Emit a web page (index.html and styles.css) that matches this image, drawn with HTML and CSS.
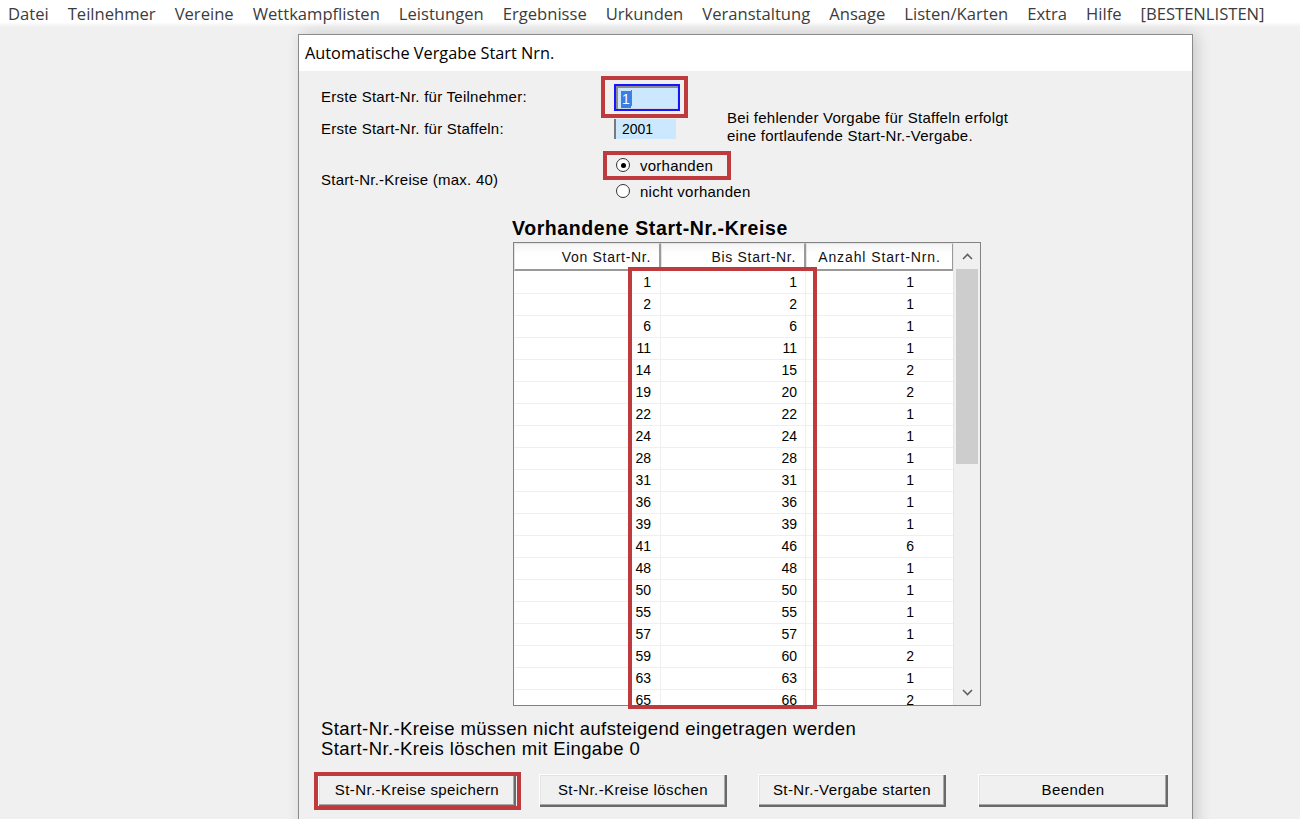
FILE: index.html
```html
<!DOCTYPE html>
<html lang="de">
<head>
    <meta charset="UTF-8">
    <title>Automatische Vergabe Start Nrn.</title>
    <link rel="stylesheet" href="styles.css">
</head>
<body>
    <nav class="menubar">
        <span>Datei</span>
        <span>Teilnehmer</span>
        <span>Vereine</span>
        <span>Wettkampflisten</span>
        <span>Leistungen</span>
        <span>Ergebnisse</span>
        <span>Urkunden</span>
        <span>Veranstaltung</span>
        <span>Ansage</span>
        <span>Listen/Karten</span>
        <span>Extra</span>
        <span>Hilfe</span>
        <span>[BESTENLISTEN]</span>
    </nav>

    <div class="desk">
        <div class="dialog">
            <div class="titlebar">Automatische Vergabe Start Nrn.</div>
            <div class="dialog-body">
                <div class="settings">
                    <label class="lbl row1">Erste Start-Nr. für Teilnehmer:</label>
                    <div class="row1 ctl">
                        <div class="field focused marked-input">
                            <span class="sel">1</span><span class="caret"></span>
                        </div>
                    </div>

                    <label class="lbl row2">Erste Start-Nr. für Staffeln:</label>
                    <div class="row2 ctl">
                        <div class="field small">2001</div>
                    </div>
                    <p class="info row2">Bei fehlender Vorgabe für Staffeln erfolgt<br>eine fortlaufende Start-Nr.-Vergabe.</p>

                    <label class="lbl row3">Start-Nr.-Kreise (max. 40)</label>
                    <div class="row3 radios">
                        <div class="radio marked-radio"><span class="dot checked"></span>vorhanden</div>
                        <div class="radio"><span class="dot"></span>nicht vorhanden</div>
                    </div>
                </div>

                <h3 class="list-title">Vorhandene Start-Nr.-Kreise</h3>

                <div class="listview">
                    <div class="cols">
                        <div class="lv-head">
                            <div>Von Start-Nr.</div>
                            <div>Bis Start-Nr.</div>
                            <div class="center">Anzahl Start-Nrn.</div>
                        </div>
                        <div class="lv-body">
                            <div class="lv-row"><div>1</div><div>1</div><div>1</div></div>
                            <div class="lv-row"><div>2</div><div>2</div><div>1</div></div>
                            <div class="lv-row"><div>6</div><div>6</div><div>1</div></div>
                            <div class="lv-row"><div>11</div><div>11</div><div>1</div></div>
                            <div class="lv-row"><div>14</div><div>15</div><div>2</div></div>
                            <div class="lv-row"><div>19</div><div>20</div><div>2</div></div>
                            <div class="lv-row"><div>22</div><div>22</div><div>1</div></div>
                            <div class="lv-row"><div>24</div><div>24</div><div>1</div></div>
                            <div class="lv-row"><div>28</div><div>28</div><div>1</div></div>
                            <div class="lv-row"><div>31</div><div>31</div><div>1</div></div>
                            <div class="lv-row"><div>36</div><div>36</div><div>1</div></div>
                            <div class="lv-row"><div>39</div><div>39</div><div>1</div></div>
                            <div class="lv-row"><div>41</div><div>46</div><div>6</div></div>
                            <div class="lv-row"><div>48</div><div>48</div><div>1</div></div>
                            <div class="lv-row"><div>50</div><div>50</div><div>1</div></div>
                            <div class="lv-row"><div>55</div><div>55</div><div>1</div></div>
                            <div class="lv-row"><div>57</div><div>57</div><div>1</div></div>
                            <div class="lv-row"><div>59</div><div>60</div><div>2</div></div>
                            <div class="lv-row"><div>63</div><div>63</div><div>1</div></div>
                            <div class="lv-row"><div>65</div><div>66</div><div>2</div></div>
                        </div>
                    </div>
                    <div class="scrollbar">
                        <div class="arrow">
                            <svg width="11" height="7" viewBox="0 0 11 7"><path d="M1 6 L5.5 1.5 L10 6" fill="none" stroke="#606060" stroke-width="1.6"/></svg>
                        </div>
                        <div class="track"><div class="thumb"></div></div>
                        <div class="arrow">
                            <svg width="11" height="7" viewBox="0 0 11 7"><path d="M1 1 L5.5 5.5 L10 1" fill="none" stroke="#606060" stroke-width="1.6"/></svg>
                        </div>
                    </div>
                    <!-- highlight over the first two columns -->
                    <div class="mark mark-cols"></div>
                </div>

                <p class="notes">Start-Nr.-Kreise müssen nicht aufsteigend eingetragen werden<br>Start-Nr.-Kreis löschen mit Eingabe 0</p>

                <div class="buttons">
                    <button class="btn btn-save marked-btn">St-Nr.-Kreise speichern</button>
                    <button class="btn btn-del">St-Nr.-Kreise löschen</button>
                    <button class="btn btn-run">St-Nr.-Vergabe starten</button>
                    <button class="btn btn-end">Beenden</button>
                </div>
            </div>
        </div>
    </div>
</body>
</html>
```
FILE: styles.css
```css
html, body {
    height: 100%;
    overflow: hidden;
}
body {
    margin: 0;
    background-color: #f0f0f0;
    font-family: "Liberation Sans", Arial, sans-serif;
    color: #000;
}

/* top menu */
.menubar {
    height: 27px;
    display: flex;
    align-items: center;
    gap: 19px;
    padding-left: 8px;
    background: linear-gradient(#fff 0, #fff 22px, #f0f0f0 27px);
    font-family: "Open Sans", sans-serif;
    font-size: 16.6px;
    color: #3c3c3c;
}

.desk {
    padding-top: 7px;
}
.dialog {
    margin-left: 298px;
    width: 893px;
    height: 820px;
    border: 1px solid #8a8a8a;
    border-bottom: none;
    background-color: #f0f0f0;
    box-shadow: 4px 0 14px rgba(0,0,0,0.16);
}
.titlebar {
    height: 36px;
    line-height: 36px;
    padding-left: 6px;
    background-color: #fff;
    font-family: "Open Sans", sans-serif;
    font-size: 16.3px;
}
.dialog-body {
    padding: 9px 0 0 22px;
    font-size: 15px;
    letter-spacing: 0.25px;
}

/* start number fields */
.settings {
    display: grid;
    grid-template-columns: 293px 113px 1fr;
    grid-template-rows: 34px 28px 62px;
}
.row1 { grid-row: 1; }
.row2 { grid-row: 2; }
.row3 { grid-row: 3; }
.lbl {
    align-self: center;
    grid-column: 1;
}
.row1.lbl { margin-top: -1px; }
.row3.lbl { margin-top: 12px; }
.ctl {
    grid-column: 2;
    display: flex;
    align-items: center;
}
.field {
    position: relative;
    box-sizing: border-box;
    background-color: #cce8ff;
    border-left: 2px solid #7a7a7a;
    padding-left: 6px;
    line-height: 20px;
    height: 20px;
    font-size: 14px;
    letter-spacing: 0;
}
.field.small {
    width: 62px;
    margin-top: 2px;
}
.field.focused {
    width: 66px;
    height: 27px;
    border: 2px solid #1515ff;
    box-shadow: inset 2px 2px 0 #8c8c8c, inset -1px -1px 0 #d6d6d6;
    padding: 3px 0 0 5px;
}
.sel {
    display: inline-block;
    background-color: #3b7fe0;
    color: #fff;
    line-height: 17px;
    padding: 0 1px;
}
.caret {
    display: inline-block;
    width: 1px;
    height: 16px;
    background-color: #d85a2a;
    vertical-align: top;
    margin-top: 1px;
}
.info {
    grid-column: 3;
    margin: -5px 0 0 0;
    line-height: 18px;
    align-self: start;
}

.radios {
    grid-column: 2 / span 2;
    padding-top: 10px;
}
.radio {
    position: relative;
    display: flex;
    align-items: center;
    height: 26px;
    margin-left: 2px;
}
.dot {
    box-sizing: border-box;
    width: 14px;
    height: 14px;
    border: 1px solid #333;
    border-radius: 50%;
    background-color: #fff;
    margin-right: 10px;
    position: relative;
}
.dot.checked::after {
    content: "";
    position: absolute;
    left: 3.5px;
    top: 3.5px;
    width: 5px;
    height: 5px;
    border-radius: 50%;
    background-color: #000;
}

/* red highlight frames */
.marked-input::after,
.marked-radio::after,
.marked-btn::after,
.mark {
    content: "";
    position: absolute;
    border: 4px solid #be3a3d;
    pointer-events: none;
}
.marked-input::after {
    left: -15px;
    right: -10px;
    top: -10px;
    bottom: -9px;
}
.marked-radio::after {
    left: -13px;
    width: 128px;
    top: -1px;
    height: 29px;
    box-sizing: border-box;
}
.marked-btn::after {
    left: -4px;
    right: -5px;
    top: -2px;
    bottom: -3px;
}

/* list of start number ranges */
.list-title {
    margin: 13px 0 0 191px;
    font-size: 19.5px;
    font-weight: bold;
    line-height: 22px;
    letter-spacing: 0.6px;
}
.listview {
    position: relative;
    display: flex;
    margin: 3px 0 0 192px;
    width: 468px;
    height: 464px;
    box-sizing: border-box;
    border: 1px solid #828282;
    background-color: #fff;
    font-size: 14px;
    letter-spacing: 0;
}
.cols {
    width: 440px;
    overflow: hidden;
}
.lv-head,
.lv-row {
    display: grid;
    grid-template-columns: 147px 145px 148px;
}
.lv-head {
    height: 28px;
}
.lv-head div {
    box-sizing: border-box;
    border: 1px solid #e3e3e3;
    border-right: 2px solid #9a9a9a;
    border-bottom: 2px solid #9a9a9a;
    background: linear-gradient(#f4f4f4, #fff 40%);
    text-align: right;
    padding: 5px 8px 0 0;
    color: #111;
    letter-spacing: 0.7px;
}
.lv-head .center {
    text-align: center;
    padding-right: 0;
    letter-spacing: 0.9px;
}
.lv-row {
    height: 22px;
}
.lv-row div {
    box-sizing: border-box;
    border-bottom: 1px solid #efefef;
    border-right: 1px solid #efefef;
    text-align: right;
    padding-right: 9px;
    line-height: 22px;
}
.lv-row div:nth-child(2) {
    padding-right: 8px;
}
.lv-row div:nth-child(3) {
    padding-right: 39px;
}
.scrollbar {
    width: 26px;
    display: flex;
    flex-direction: column;
    background-color: #f0f0f0;
    border-left: 1px solid #e6e6e6;
}
.arrow {
    height: 26px;
    display: flex;
    align-items: center;
    justify-content: center;
}
.track {
    flex: 1;
    padding: 0 2px;
}
.thumb {
    height: 195px;
    background-color: #cdcdcd;
}
.mark-cols {
    left: 114px;
    top: 24px;
    width: 189px;
    height: 442px;
    box-sizing: border-box;
}

.notes {
    margin: 13px 0 0 0;
    font-size: 18.5px;
    line-height: 20px;
    letter-spacing: 0.4px;
}

/* bottom buttons */
.buttons {
    display: flex;
    margin: 15px 0 0 -3px;
}
.btn {
    position: relative;
    height: 33px;
    font-family: "Liberation Sans", Arial, sans-serif;
    font-size: 15px;
    letter-spacing: 0.4px;
    color: #000;
    background-color: #f0f0f0;
    border: none;
    border-radius: 0;
    box-shadow: inset 1px 1px 0 #fff, inset -2px -2px 0 #6a6a6a, inset -3px -3px 0 #a8a8a8, inset 2px 2px 0 #e3e3e3;
    padding: 0 0 2px 0;
}
.btn-save { width: 198px; }
.btn-del { width: 188px; margin-left: 23px; }
.btn-run { width: 188px; margin-left: 31px; }
.btn-end { width: 190px; margin-left: 32px; }
```
